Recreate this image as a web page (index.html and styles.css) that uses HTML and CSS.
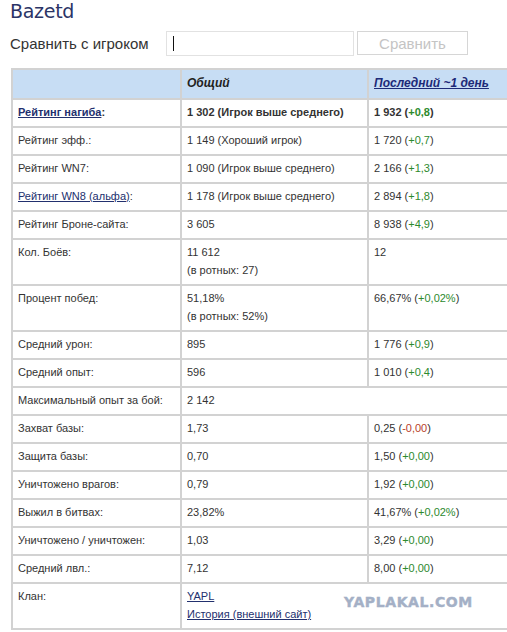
FILE: index.html
```html
<!DOCTYPE html>
<html lang="ru">
<head>
<meta charset="utf-8">
<title>Bazetd</title>
<link rel="stylesheet" href="styles.css">
</head>
<body>
<h1 class="title">Bazetd</h1>
<div class="compare">
  <span class="compare-label">Сравнить с игроком</span>
  <div class="compare-input"><span class="caret"></span></div>
  <button class="compare-btn" type="button">Сравнить</button>
</div>
<div class="wrap">
<table class="stats">
  <colgroup><col class="c1"><col class="c2"><col class="c3"></colgroup>
  <thead>
    <tr><th></th><th>Общий</th><th><a href="#" class="hlink">Последний ~1 день</a></th></tr>
  </thead>
  <tbody>
    <tr class="bold"><td><a href="#" class="link">Рейтинг нагиба</a>:</td><td>1 302 (Игрок выше среднего)</td><td>1 932 (<span class="up">+0,8</span>)</td></tr>
    <tr><td>Рейтинг эфф.:</td><td>1 149 (Хороший игрок)</td><td>1 720 (<span class="up">+0,7</span>)</td></tr>
    <tr><td>Рейтинг WN7:</td><td>1 090 (Игрок выше среднего)</td><td>2 166 (<span class="up">+1,3</span>)</td></tr>
    <tr><td><a href="#" class="link">Рейтинг WN8 (альфа)</a>:</td><td>1 178 (Игрок выше среднего)</td><td>2 894 (<span class="up">+1,8</span>)</td></tr>
    <tr><td>Рейтинг Броне-сайта:</td><td>3 605</td><td>8 938 (<span class="up">+4,9</span>)</td></tr>
    <tr><td>Кол. Боёв:</td><td>11 612<br>(в ротных: 27)</td><td>12</td></tr>
    <tr><td>Процент побед:</td><td>51,18%<br>(в ротных: 52%)</td><td>66,67% (<span class="up">+0,02%</span>)</td></tr>
    <tr><td>Средний урон:</td><td>895</td><td>1 776 (<span class="up">+0,9</span>)</td></tr>
    <tr><td>Средний опыт:</td><td>596</td><td>1 010 (<span class="up">+0,4</span>)</td></tr>
    <tr><td>Максимальный опыт за бой:</td><td colspan="2" class="span">2 142</td></tr>
    <tr><td>Захват базы:</td><td>1,73</td><td>0,25 (<span class="down">-0,00</span>)</td></tr>
    <tr><td>Защита базы:</td><td>0,70</td><td>1,50 (<span class="up">+0,00</span>)</td></tr>
    <tr><td>Уничтожено врагов:</td><td>0,79</td><td>1,92 (<span class="up">+0,00</span>)</td></tr>
    <tr><td>Выжил в битвах:</td><td>23,82%</td><td>41,67% (<span class="up">+0,02%</span>)</td></tr>
    <tr><td>Уничтожено / уничтожен:</td><td>1,03</td><td>3,29 (<span class="up">+0,00</span>)</td></tr>
    <tr><td>Средний лвл.:</td><td>7,12</td><td>8,00 (<span class="up">+0,00</span>)</td></tr>
    <tr><td>Клан:</td><td colspan="2" class="span"><a href="#" class="link">YAPL</a><br><a href="#" class="link">История (внешний сайт)</a></td></tr>
  </tbody>
</table>
<div class="watermark">YAPLAKAL.COM</div>
</div>
</body>
</html>
```

FILE: styles.css
```css
html, body {
  margin: 0;
  padding: 0;
  background: #ffffff;
}
body {
  padding: 0 0 0 10px;
  font-family: "Liberation Sans", Arial, sans-serif;
  color: #333333;
}
.title {
  margin: 0;
  height: 26px;
  font-size: 19px;
  line-height: 22px;
  font-weight: normal;
  color: #2b3466;
  font-family: "DejaVu Sans", Verdana, sans-serif;
  letter-spacing: -0.3px;
}
.compare {
  display: flex;
  align-items: center;
  height: 26px;
  margin-top: 4px;
}
.compare-label {
  font-size: 15px;
  color: #333;
  width: 156px;
}
.compare-input {
  box-sizing: border-box;
  width: 188px;
  height: 25px;
  border: 1px solid #e2e2e2;
  display: flex;
  align-items: center;
  padding-left: 6px;
}
.caret {
  display: block;
  width: 1px;
  height: 15px;
  background: #111;
}
.compare-btn {
  box-sizing: border-box;
  margin-left: 3px;
  width: 111px;
  height: 24px;
  border: 1px solid #d6d6d6;
  background: #fff;
  color: #c4c4c4;
  font-family: "Liberation Sans", Arial, sans-serif;
  font-size: 15px;
  padding: 0;
}
.wrap {
  position: relative;
  margin-top: 12px;
  margin-left: 1px;
}
.stats {
  border-collapse: collapse;
  table-layout: fixed;
  width: 496px;
  font-size: 11px;
  color: #333;
}
.c1 { width: 169px; }
.c2 { width: 187px; }
.c3 { width: 140px; }
.stats th, .stats td {
  border: 2px solid #d2d2d2;
  padding: 3px 5px 5px 5px;
  line-height: 18px;
  text-align: left;
  vertical-align: top;
  white-space: nowrap;
}
.stats th {
  background: #c7ddf4;
  font-size: 12px;
  font-weight: bold;
  font-style: italic;
  color: #222;
  height: 19px;
  padding-top: 4px;
  padding-bottom: 5px;
}
.stats td.span {
  border-right: none;
}
.bold td { font-weight: bold; }
.hlink {
  color: #1d2a78;
  text-decoration: underline;
}
.link {
  color: #22306e;
  text-decoration: underline;
}
.up { color: #2d8a2d; }
.down { color: #b8402a; }
.watermark {
  position: absolute;
  left: 333px;
  top: 526px;
  font-family: "DejaVu Sans", Verdana, sans-serif;
  font-weight: bold;
  font-size: 14px;
  letter-spacing: 0.6px;
  color: #a4b0c6;
  -webkit-text-stroke: 0.4px #a4b0c6;
}
```
